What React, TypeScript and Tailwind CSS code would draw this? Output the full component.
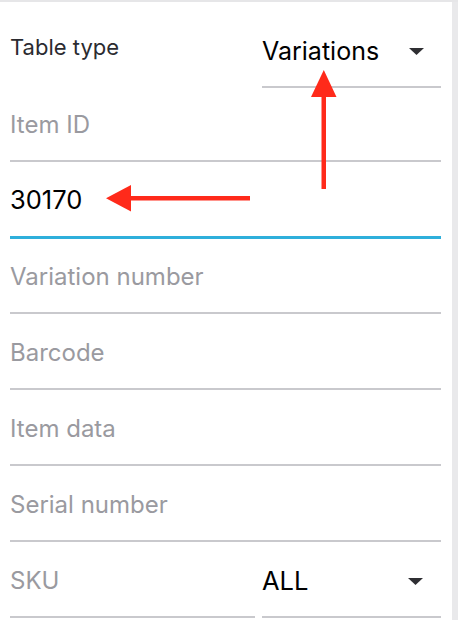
import React from "react";

const font = { fontFamily: "Inter, 'Noto Sans', sans-serif" };

function Caret() {
  return (
    <svg width="15" height="7" viewBox="0 0 15 7" className="shrink-0">
      <path d="M0 0 L15 0 L7.5 7 Z" fill="#2f2f33" />
    </svg>
  );
}

function PlaceholderRow({ label, h }: { label: string; h: string }) {
  return (
    <div className={`flex ${h} flex-col justify-end border-b-2 border-[#c9c9cd] pb-[20px]`}>
      <span className="text-[24px] leading-[30px] text-[#9a9aa0]">{label}</span>
    </div>
  );
}

export default function App() {
  return (
    <div className="flex h-[620px] w-[458px] flex-col bg-[#e6e6e8] pt-[2px]" style={font}>
      <div className="relative flex flex-1 border-r-[6px] border-[#e9e9eb]">
        <div className="flex flex-1 flex-col bg-white pl-[10px] pr-[11px]">
          {/* Table type */}
          <div className="flex h-[86px]">
            <div className="flex w-[245px] pt-[30px]">
              <span className="text-[22px] leading-[30px] text-[#2b2b30]">Table type</span>
            </div>
            <div className="ml-[7px] flex flex-1 items-start border-b-2 border-[#c9c9cd] pt-[34px]">
              <span className="flex-1 text-[25px] leading-[30px] text-black">Variations</span>
              <div className="mr-[17px] mt-[12px]">
                <Caret />
              </div>
            </div>
          </div>
          <PlaceholderRow label="Item ID" h="h-[74px]" />
          {/* 30170 */}
          <div className="flex h-[77px] flex-col justify-end border-b-[3px] border-[#2eafdb] pb-[21px]">
            <span className="text-[25.5px] leading-[30px] text-black">30170</span>
          </div>
          <PlaceholderRow label="Variation number" h="h-[75px]" />
          <PlaceholderRow label="Barcode" h="h-[76px]" />
          <PlaceholderRow label="Item data" h="h-[76px]" />
          <PlaceholderRow label="Serial number" h="h-[76px]" />
          {/* SKU */}
          <div className="flex h-[76px]">
            <div className="flex w-[245px] flex-col justify-end border-b-2 border-[#c9c9cd] pb-[20px]">
              <span className="text-[24px] leading-[30px] text-[#9a9aa0]">SKU</span>
            </div>
            <div className="ml-[7px] flex flex-1 items-end border-b-2 border-[#c9c9cd] pb-[20px]">
              <span className="flex-1 text-[25.5px] leading-[30px] text-black">ALL</span>
              <div className="mb-[11px] mr-[18px]">
                <Caret />
              </div>
            </div>
          </div>
        </div>
        {/* annotation arrows */}
        <svg
          className="pointer-events-none absolute left-0 top-[-2px]"
          width="452"
          height="620"
          viewBox="0 0 452 620"
        >
          <rect x="321.5" y="95" width="4.5" height="94" fill="#ff2a1a" />
          <path d="M323.8 70 L336.5 97 L311 97 Z" fill="#ff2a1a" />
          <rect x="129" y="196" width="121" height="4.5" fill="#ff2a1a" />
          <path d="M106 198.3 L131 185 L131 211.5 Z" fill="#ff2a1a" />
        </svg>
      </div>
    </div>
  );
}
